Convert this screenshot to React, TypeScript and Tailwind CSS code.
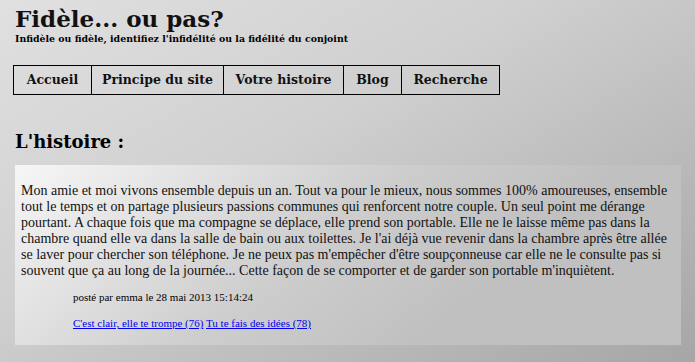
import React from 'react';

const serif = { fontFamily: '"DejaVu Serif", "Liberation Serif", serif' };
const times = { fontFamily: '"Liberation Serif", "DejaVu Serif", serif' };

const navItems = [
  { label: 'Accueil', w: 'w-[77px]' },
  { label: 'Principe du site', w: 'w-[132px]' },
  { label: 'Votre histoire', w: 'w-[120px]' },
  { label: 'Blog', w: 'w-[58px]' },
  { label: 'Recherche', w: 'w-[98px]' },
];

// the story as it wraps in the original page
const storyLines = [
  'Mon amie et moi vivons ensemble depuis un an. Tout va pour le mieux, nous sommes 100% amoureuses, ensemble',
  'tout le temps et on partage plusieurs passions communes qui renforcent notre couple. Un seul point me dérange',
  'pourtant. A chaque fois que ma compagne se déplace, elle prend son portable. Elle ne le laisse même pas dans la',
  "chambre quand elle va dans la salle de bain ou aux toilettes. Je l'ai déjà vue revenir dans la chambre après être allée",
  "se laver pour chercher son téléphone. Je ne peux pas m'empêcher d'être soupçonneuse car elle ne le consulte pas si",
  "souvent que ça au long de la journée... Cette façon de se comporter et de garder son portable m'inquiètent.",
];

const App: React.FC = () => {
  return (
    <div
      className="w-[695px] h-[362px] overflow-hidden text-black bg-[linear-gradient(150deg,#e0e0e0_0%,#d0d0d0_40%,#a6a6a6_100%)]"
      style={serif}
    >
      {/* Header */}
      <header className="pl-[15px] pt-[5px]">
        <h1 className="text-[23px] leading-[28px] font-bold text-[#111]">Fidèle... ou pas?</h1>
        <p className="text-[9.4px] leading-[12px] font-bold">
          Infidèle ou fidèle, identifiez l'infidélité ou la fidélité du conjoint
        </p>
      </header>

      {/* Menu */}
      <nav className="ml-[13px] mt-[20px] flex w-fit border border-black">
        {navItems.map((item, i) => (
          <a
            key={item.label}
            href="#"
            className={`${item.w} h-[28px] flex items-center justify-center text-[12.5px] font-bold text-[#111] ${
              i > 0 ? 'border-l border-black' : ''
            }`}
          >
            {item.label}
          </a>
        ))}
      </nav>

      {/* Story */}
      <h2 className="pl-[15px] mt-[36px] text-[18px] leading-[22px] font-bold">L'histoire :</h2>

      <section
        className="ml-[15px] mt-[12px] w-[666px] h-[180px] px-[6px] pt-[18px] bg-[linear-gradient(140deg,#f6f6f6_0%,#cdcdcd_45%,#c0c0c0_70%)]"
        style={times}
      >
        <p className="text-[14px] leading-[16px] text-[#111]">
          {storyLines.map((line) => (
            <span key={line} className="block whitespace-nowrap">
              {line}
            </span>
          ))}
        </p>
        <div className="pl-[52px] mt-[11px] text-[11px] leading-[14px]">
          <p>posté par emma le 28 mai 2013 15:14:24</p>
          <p className="mt-[12px]">
            <a href="#" className="text-[#0000ee] underline">C'est clair, elle te trompe (76)</a>{' '}
            <a href="#" className="text-[#0000ee] underline">Tu te fais des idées (78)</a>
          </p>
        </div>
      </section>
    </div>
  );
};

export default App;
